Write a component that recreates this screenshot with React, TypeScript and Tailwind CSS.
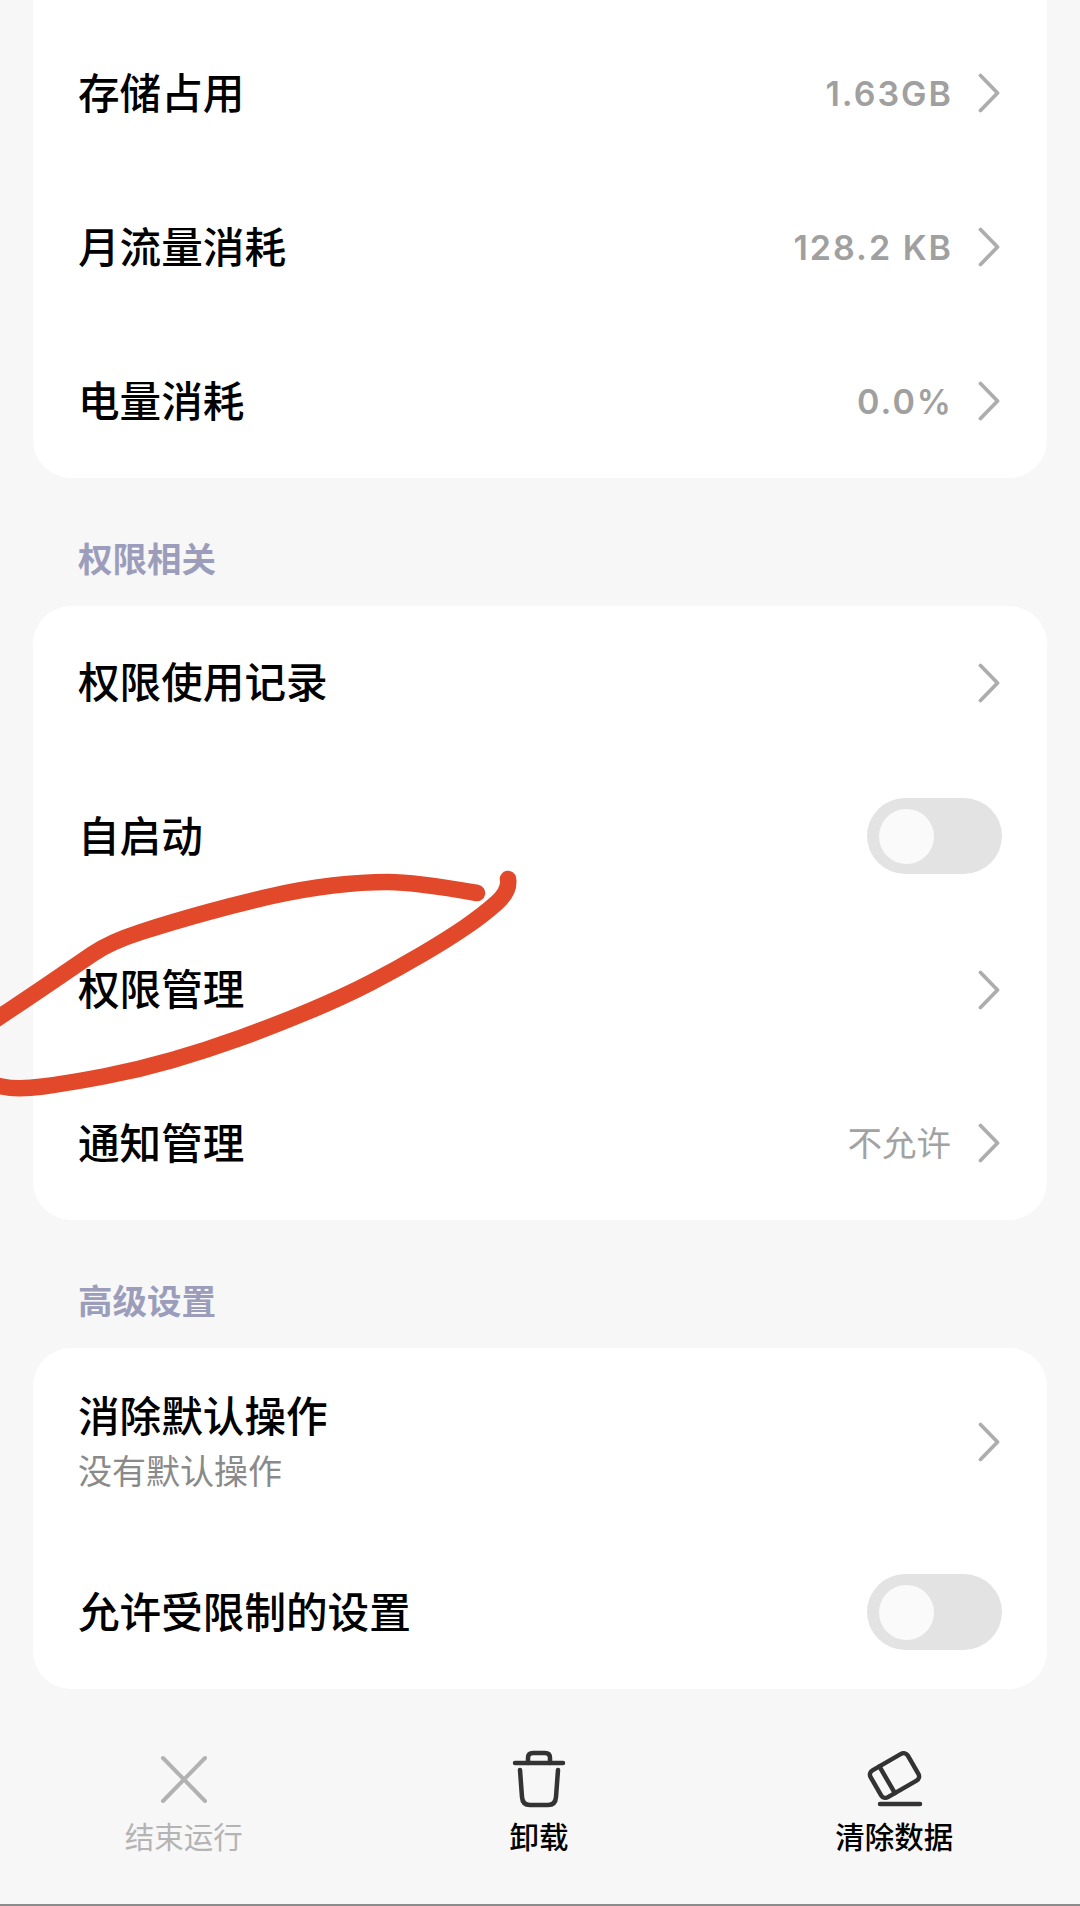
import React from "react";

function smooth(pts: number[][]) {
  let d = `M${pts[0][0]} ${pts[0][1]}`;
  for (let i = 1; i < pts.length - 1; i++) {
    const mx = (pts[i][0] + pts[i + 1][0]) / 2;
    const my = (pts[i][1] + pts[i + 1][1]) / 2;
    d += ` Q${pts[i][0]} ${pts[i][1]} ${mx} ${my}`;
  }
  const l = pts[pts.length - 1];
  return d + ` L${l[0]} ${l[1]}`;
}

const strokeA = [[477, 893], [414, 882], [362, 882], [303, 889], [241, 903], [172, 922], [110, 942], [75, 966], [34, 994], [-14, 1026]];
const strokeB = [[508, 879], [510, 891], [483, 915], [448, 939], [397, 969], [345, 996], [276, 1025], [207, 1050], [138, 1070], [69, 1083], [17, 1090], [-14, 1083]];

function Chevron() {
  return (
    <svg width="24" height="40" viewBox="0 0 24 40" fill="none" className="shrink-0">
      <path d="M3.5 2.5 L20.5 20 L3.5 37.5" stroke="#adadad" strokeWidth="3.8" strokeLinecap="round" strokeLinejoin="round" />
    </svg>
  );
}

function Toggle() {
  return (
    <div className="w-[135px] h-[76px] rounded-full bg-[#e3e3e3] flex items-center pl-[12px] mr-[-1px]">
      <div className="w-[55px] h-[55px] rounded-full bg-[#fafafa]" />
    </div>
  );
}

function Row({ label, value, latin, toggle, sub, h = "h-[154px]" }: { label: string; value?: string; latin?: boolean; toggle?: boolean; sub?: string; h?: string }) {
  return (
    <div className={`${h} flex items-center justify-between pl-[45px] pr-[46px]`}>
      <div className={`flex flex-col ${sub ? "mb-[4px]" : "mb-[5px]"}`}>
        <span className="text-[41.6px] leading-[50px] font-medium text-black">{label}</span>
        {sub && <span className="text-[34px] leading-[42px] text-[#8a8a8a] mt-[10px]">{sub}</span>}
      </div>
      {toggle ? (
        <Toggle />
      ) : (
        <div className="flex items-center gap-[24px]">
          {value && (
            latin ? (
              <span className="font-['Inter',sans-serif] text-[34px] font-semibold tracking-[2px] text-[#a0a0a0]">{value}</span>
            ) : (
              <span className="text-[34.5px] mb-[2px] text-[#a2a2a2] mr-[2px]">{value}</span>
            )
          )}
          <Chevron />
        </div>
      )}
    </div>
  );
}

function Section({ title }: { title: string }) {
  return (
    <div className="h-[128px] flex items-end pl-[78px] pb-[31px]">
      <span className="text-[34.5px] leading-[36px] font-bold text-[#9b9dbb]">{title}</span>
    </div>
  );
}

function Action({ label, muted, children }: { label: string; muted?: boolean; children: React.ReactNode }) {
  return (
    <div className="flex flex-col items-center">
      {children}
      <span className={`mt-[7px] text-[29.5px] leading-[36px] ${muted ? "text-[#b4b4b4]" : "font-medium text-black"}`}>{label}</span>
    </div>
  );
}

export default function App() {
  return (
    <div className="relative h-[1906px] w-[1080px] overflow-hidden bg-[#f7f7f7] flex flex-col font-['Noto_Sans_CJK_SC','Noto_Sans',sans-serif]">
      <div className="mx-[33px] bg-white rounded-b-[38px] pt-[16px]">
        <Row label="存储占用" value="1.63GB" latin />
        <Row label="月流量消耗" value="128.2 KB" latin />
        <Row label="电量消耗" value="0.0%" latin />
      </div>
      <Section title="权限相关" />
      <div className="mx-[33px] bg-white rounded-[38px]">
        <Row label="权限使用记录" h="h-[153.5px]" />
        <Row label="自启动" toggle h="h-[153.5px]" />
        <Row label="权限管理" h="h-[153.5px]" />
        <Row label="通知管理" value="不允许" h="h-[153.5px]" />
      </div>
      <Section title="高级设置" />
      <div className="mx-[33px] bg-white rounded-[38px]">
        <Row label="消除默认操作" sub="没有默认操作" h="h-[187px]" />
        <Row label="允许受限制的设置" toggle h="h-[154px]" />
      </div>
      <div className="flex-1 grid grid-cols-3 pl-[6px] pr-[8px] pt-[59px] border-b-2 border-[#8c8c8c]">
        <Action label="结束运行" muted>
          <svg width="62" height="62" viewBox="0 0 62 62" fill="none">
            <path d="M10 10 L52 53 M52 10 L10 53" stroke="#b2b2b2" strokeWidth="4" strokeLinecap="round" />
          </svg>
        </Action>
        <Action label="卸载">
          <svg width="62" height="62" viewBox="0 0 62 62" fill="none" stroke="#333333" strokeWidth="4.5" strokeLinecap="round" strokeLinejoin="round">
            <path d="M7 15 H55" />
            <path d="M20 15 V10 Q20 5 25 5 H37 Q42 5 42 10 V15" />
            <path d="M12 22 L14 49 Q14.5 57 22 57 H40 Q47.5 57 48 49 L50 22" />
          </svg>
        </Action>
        <Action label="清除数据">
          <svg width="65" height="62" viewBox="0 0 65 62" fill="none" stroke="#333333" strokeWidth="4.5" strokeLinecap="round" strokeLinejoin="round">
            <g transform="rotate(-30 32.5 27.5)">
              <rect x="11" y="12" width="43" height="31" rx="5" />
              <path d="M24 12 V43" />
            </g>
            <path d="M18 56 H58" />
          </svg>
        </Action>
      </div>
      <svg className="absolute inset-0 pointer-events-none" width="1080" height="1906" viewBox="0 0 1080 1906" fill="none">
        <path d={smooth(strokeA)} stroke="#e2492b" strokeWidth="16.5" strokeLinecap="round" strokeLinejoin="round" />
        <path d={smooth(strokeB)} stroke="#e2492b" strokeWidth="16.5" strokeLinecap="round" strokeLinejoin="round" />
      </svg>
    </div>
  );
}
